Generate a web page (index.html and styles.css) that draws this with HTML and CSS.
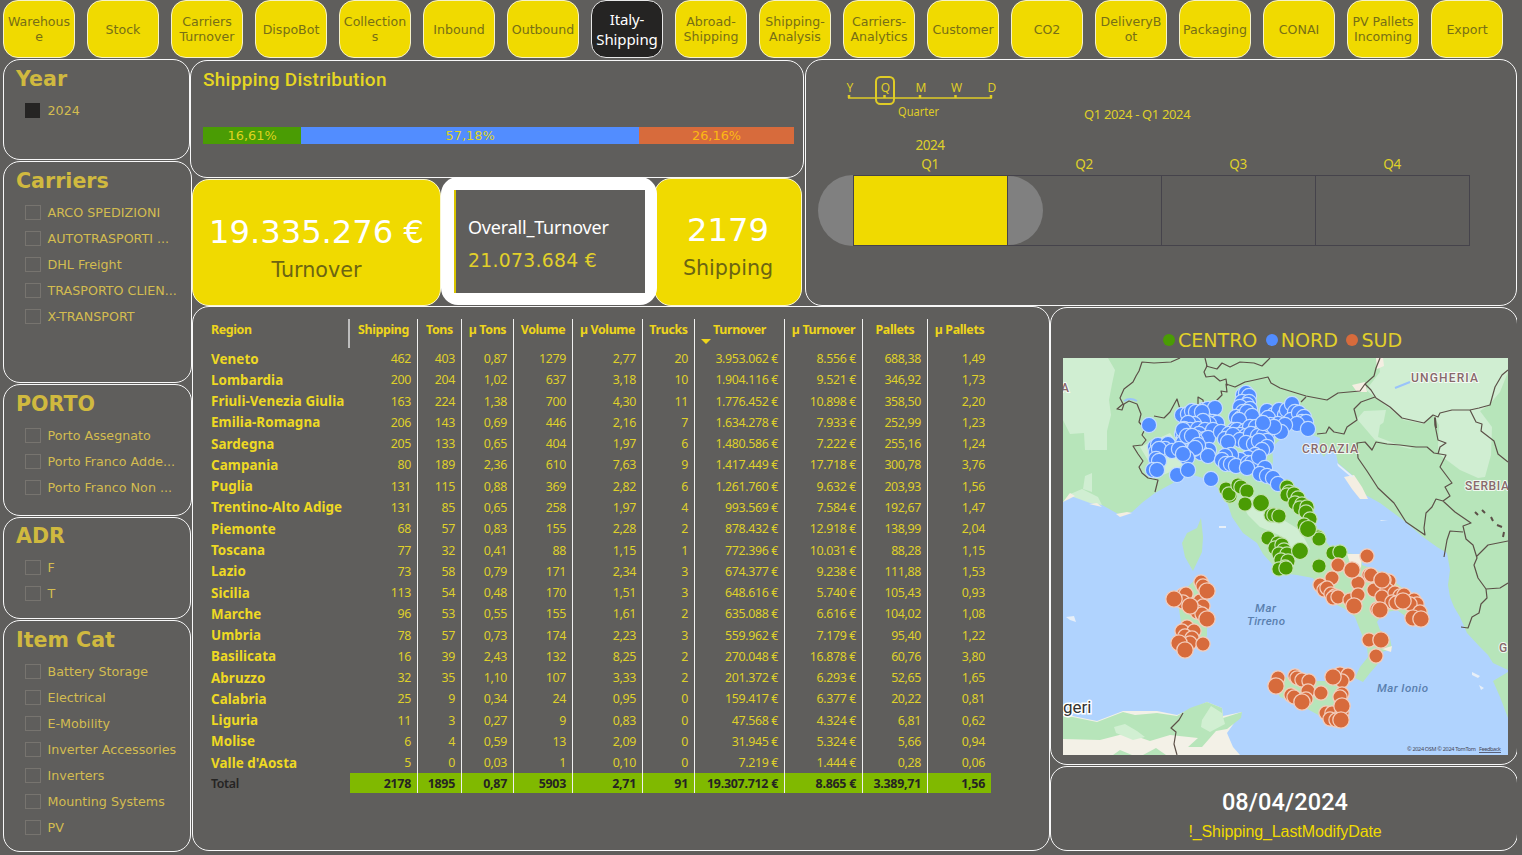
FILE: index.html
```html
<!DOCTYPE html>
<html lang="it">
<head>
<meta charset="utf-8">
<title>Italy-Shipping</title>
<link rel="stylesheet" href="styles.css">
</head>
<body>
<nav class="tabs">
<a class="tab">Warehous<br>e</a><a class="tab">Stock</a><a class="tab">Carriers Turnover</a><a class="tab">DispoBot</a><a class="tab">Collection<br>s</a><a class="tab">Inbound</a><a class="tab">Outbound</a><a class="tab active">Italy-<br>Shipping</a><a class="tab">Abroad-<br>Shipping</a><a class="tab">Shipping-<br>Analysis</a><a class="tab">Carriers-<br>Analytics</a><a class="tab">Customer</a><a class="tab">CO2</a><a class="tab">DeliveryB<br>ot</a><a class="tab">Packaging</a><a class="tab">CONAI</a><a class="tab">PV Pallets Incoming</a><a class="tab">Export</a>
</nav>
<div class="main">
<aside class="filters">
<section class="panel slicer year"><h2>Year</h2><ul><li class="on">2024</li></ul></section>
<section class="panel slicer carriers"><h2>Carriers</h2><ul><li>ARCO SPEDIZIONI</li><li>AUTOTRASPORTI ...</li><li>DHL Freight</li><li>TRASPORTO CLIEN...</li><li>X-TRANSPORT</li></ul></section>
<section class="panel slicer porto"><h2>PORTO</h2><ul><li>Porto Assegnato</li><li>Porto Franco Adde...</li><li>Porto Franco Non ...</li></ul></section>
<section class="panel slicer adr"><h2>ADR</h2><ul><li>F</li><li>T</li></ul></section>
<section class="panel slicer items"><h2>Item Cat</h2><ul><li>Battery Storage</li><li>Electrical</li><li>E-Mobility</li><li>Inverter Accessories</li><li>Inverters</li><li>Mounting Systems</li><li>PV</li></ul></section>
</aside>
<div class="content">
<div class="upper">
<div class="summary">
<section class="panel distribution">
<h2>Shipping Distribution</h2>
<div class="bar"><span class="centro" style="width:16.61%">16,61%</span><span class="nord" style="width:57.18%">57,18%</span><span class="sud" style="width:26.21%">26,16%</span></div>
</section>
<div class="cards">
<section class="card turnover"><b>19.335.276 €</b><span>Turnover</span></section>
<section class="overall"><div><span>Overall_Turnover</span><b>21.073.684 €</b></div></section>
<section class="card shipping"><b>2179</b><span>Shipping</span></section>
</div>
</div>
<section class="panel timeline">
<div class="controls">
<svg class="grain" width="160" height="50" viewBox="840 72 160 50">
<path d="M848 98H992" stroke="#dfcc26" stroke-width="1.5"/>
<path d="M849 95v3M884.500 95v3M920 95v3M955.500 95v3M991 95v3" stroke="#dfcc26" stroke-width="2.500"/>
<rect x="876" y="77" width="18" height="27" rx="4.500" fill="none" stroke="#dfcc26" stroke-width="2"/>
<text x="850" y="92">Y</text><text x="885.500" y="92">Q</text><text x="921" y="92">M</text><text x="956.500" y="92">W</text><text x="992" y="92">D</text>
<text x="918.500" y="116" textLength="41" lengthAdjust="spacingAndGlyphs">Quarter</text>
</svg>
<span class="range">Q1 2024 - Q1 2024</span>
</div>
<div class="years"><span>2024</span></div>
<div class="quarters"><span>Q1</span><span>Q2</span><span>Q3</span><span>Q4</span></div>
<div class="cells"><i class="handle left"></i><i class="cell chosen"></i><i class="cell next"><i class="handle right"></i></i><i class="cell"></i><i class="cell"></i></div>
</section>
</div>
<div class="lower">
<section class="panel table-panel">
<table>
<colgroup><col class="c-region"><col class="c1"><col class="c2"><col class="c3"><col class="c4"><col class="c5"><col class="c6"><col class="c7"><col class="c8"><col class="c9"><col class="c10"></colgroup>
<thead><tr><th>Region</th><th>Shipping</th><th>Tons</th><th>µ Tons</th><th>Volume</th><th>µ Volume</th><th>Trucks</th><th class="sorted">Turnover</th><th>µ Turnover</th><th>Pallets</th><th>µ Pallets</th></tr></thead>
<tbody>
<tr><th>Veneto</th><td>462</td><td>403</td><td>0,87</td><td>1279</td><td>2,77</td><td>20</td><td>3.953.062 €</td><td>8.556 €</td><td>688,38</td><td>1,49</td></tr>
<tr><th>Lombardia</th><td>200</td><td>204</td><td>1,02</td><td>637</td><td>3,18</td><td>10</td><td>1.904.116 €</td><td>9.521 €</td><td>346,92</td><td>1,73</td></tr>
<tr><th>Friuli-Venezia Giulia</th><td>163</td><td>224</td><td>1,38</td><td>700</td><td>4,30</td><td>11</td><td>1.776.452 €</td><td>10.898 €</td><td>358,50</td><td>2,20</td></tr>
<tr><th>Emilia-Romagna</th><td>206</td><td>143</td><td>0,69</td><td>446</td><td>2,16</td><td>7</td><td>1.634.278 €</td><td>7.933 €</td><td>252,99</td><td>1,23</td></tr>
<tr><th>Sardegna</th><td>205</td><td>133</td><td>0,65</td><td>404</td><td>1,97</td><td>6</td><td>1.480.586 €</td><td>7.222 €</td><td>255,16</td><td>1,24</td></tr>
<tr><th>Campania</th><td>80</td><td>189</td><td>2,36</td><td>610</td><td>7,63</td><td>9</td><td>1.417.449 €</td><td>17.718 €</td><td>300,78</td><td>3,76</td></tr>
<tr><th>Puglia</th><td>131</td><td>115</td><td>0,88</td><td>369</td><td>2,82</td><td>6</td><td>1.261.760 €</td><td>9.632 €</td><td>203,93</td><td>1,56</td></tr>
<tr><th>Trentino-Alto Adige</th><td>131</td><td>85</td><td>0,65</td><td>258</td><td>1,97</td><td>4</td><td>993.569 €</td><td>7.584 €</td><td>192,67</td><td>1,47</td></tr>
<tr><th>Piemonte</th><td>68</td><td>57</td><td>0,83</td><td>155</td><td>2,28</td><td>2</td><td>878.432 €</td><td>12.918 €</td><td>138,99</td><td>2,04</td></tr>
<tr><th>Toscana</th><td>77</td><td>32</td><td>0,41</td><td>88</td><td>1,15</td><td>1</td><td>772.396 €</td><td>10.031 €</td><td>88,28</td><td>1,15</td></tr>
<tr><th>Lazio</th><td>73</td><td>58</td><td>0,79</td><td>171</td><td>2,34</td><td>3</td><td>674.377 €</td><td>9.238 €</td><td>111,88</td><td>1,53</td></tr>
<tr><th>Sicilia</th><td>113</td><td>54</td><td>0,48</td><td>170</td><td>1,51</td><td>3</td><td>648.616 €</td><td>5.740 €</td><td>105,43</td><td>0,93</td></tr>
<tr><th>Marche</th><td>96</td><td>53</td><td>0,55</td><td>155</td><td>1,61</td><td>2</td><td>635.088 €</td><td>6.616 €</td><td>104,02</td><td>1,08</td></tr>
<tr><th>Umbria</th><td>78</td><td>57</td><td>0,73</td><td>174</td><td>2,23</td><td>3</td><td>559.962 €</td><td>7.179 €</td><td>95,40</td><td>1,22</td></tr>
<tr><th>Basilicata</th><td>16</td><td>39</td><td>2,43</td><td>132</td><td>8,25</td><td>2</td><td>270.048 €</td><td>16.878 €</td><td>60,76</td><td>3,80</td></tr>
<tr><th>Abruzzo</th><td>32</td><td>35</td><td>1,10</td><td>107</td><td>3,33</td><td>2</td><td>201.372 €</td><td>6.293 €</td><td>52,65</td><td>1,65</td></tr>
<tr><th>Calabria</th><td>25</td><td>9</td><td>0,34</td><td>24</td><td>0,95</td><td>0</td><td>159.417 €</td><td>6.377 €</td><td>20,22</td><td>0,81</td></tr>
<tr><th>Liguria</th><td>11</td><td>3</td><td>0,27</td><td>9</td><td>0,83</td><td>0</td><td>47.568 €</td><td>4.324 €</td><td>6,81</td><td>0,62</td></tr>
<tr><th>Molise</th><td>6</td><td>4</td><td>0,59</td><td>13</td><td>2,09</td><td>0</td><td>31.945 €</td><td>5.324 €</td><td>5,66</td><td>0,94</td></tr>
<tr><th>Valle d'Aosta</th><td>5</td><td>0</td><td>0,03</td><td>1</td><td>0,10</td><td>0</td><td>7.219 €</td><td>1.444 €</td><td>0,28</td><td>0,06</td></tr>
</tbody>
<tfoot><tr><th>Total</th><td>2178</td><td>1895</td><td>0,87</td><td>5903</td><td>2,71</td><td>91</td><td>19.307.712 €</td><td>8.865 €</td><td>3.389,71</td><td>1,56</td></tr></tfoot>
</table>
</section>
<div class="side">
<section class="panel map-panel">
<div class="legend"><i class="centro"></i><span>CENTRO</span><i class="nord"></i><span>NORD</span><i class="sud"></i><span>SUD</span></div>
<svg class="map" width="445" height="397" viewBox="1063 358 445 397">
<defs>
<marker id="n" markerUnits="userSpaceOnUse" markerWidth="20" markerHeight="20" refX="10" refY="10"><circle cx="10" cy="10" r="7.600" fill="#528dff" stroke="#c3dcff" stroke-width="1.200"/></marker>
<marker id="c" markerUnits="userSpaceOnUse" markerWidth="20" markerHeight="20" refX="10" refY="10"><circle cx="10" cy="10" r="7.200" fill="#4a9c04" stroke="#c5e3b4" stroke-width="1.200"/></marker>
<marker id="cb" markerUnits="userSpaceOnUse" markerWidth="20" markerHeight="20" refX="10" refY="10"><circle cx="10" cy="10" r="8.500" fill="#4a9c04" stroke="#c5e3b4" stroke-width="1.200"/></marker>
<marker id="s" markerUnits="userSpaceOnUse" markerWidth="20" markerHeight="20" refX="10" refY="10"><circle cx="10" cy="10" r="7.100" fill="#d76b3c" stroke="#f3cdbb" stroke-width="1.300"/></marker>
<marker id="sb" markerUnits="userSpaceOnUse" markerWidth="20" markerHeight="20" refX="10" refY="10"><circle cx="10" cy="10" r="8.200" fill="#d76b3c" stroke="#f3cdbb" stroke-width="1.300"/></marker>
</defs>
<rect x="1063" y="358" width="445" height="397" fill="#b0d3fe"/>
<!-- mainland -->
<path fill="#b7e5ba" d="M1063 358H1508V670L1493 663 1488 655 1480 647 1467 633 1460 617 1454 607 1450 597 1448 585 1450 570 1447 553 1437 547 1423 537 1403 520 1380 503 1362 493 1352 475 1338 463 1335 449 1330 447 1324 457 1318 449 1320 438 1307 433 1290 430 1282 438 1272 447 1273 460 1272 470 1280 480 1290 483 1300 493 1310 507 1318 530 1330 547 1345 553 1362 555 1362 565 1377 570 1393 580 1413 597 1428 610 1427 620 1413 622 1397 610 1383 613 1377 622 1380 630 1390 638 1392 649 1382 652 1377 665 1370 673 1363 682 1355 678 1360 667 1368 657 1367 647 1360 630 1355 617 1347 610 1337 605 1323 593 1313 578 1297 575 1280 573 1263 554 1257 543 1243 533 1232 517 1227 502 1218 488 1203 478 1193 475 1183 478 1173 483 1155 493 1143 502 1132 512 1120 515 1102 505 1090 500 1074 495 1063 502Z"/>
<path fill="#b7e5ba" d="M1201 518L1203 537 1202 552 1193 571 1185 557 1182 543 1187 533 1197 528ZM1197 578L1182 592 1178 603 1181 622 1184 645 1192 651 1207 636 1207 605 1205 590ZM1272 681L1285 677 1300 681 1330 681 1352 673 1345 690 1342 705 1345 717 1338 722 1322 717 1300 705 1280 697ZM1508 672L1493 681 1500 697 1508 718Z"/>
<!-- north Africa -->
<path fill="#f3f1e7" d="M1063 714L1097 721 1123 711 1157 711 1177 715 1207 702 1222 708 1223 716 1242 712 1227 733 1233 747 1240 755H1063Z"/>
<path fill="#b7e5ba" d="M1063 715L1097 722 1123 712 1135 715 1157 713 1177 716 1190 708 1207 702 1222 708 1223 718 1242 712 1241 718 1227 729 1216 731 1202 747 1188 747 1198 738 1170 735 1150 741 1127 733 1100 740 1063 739ZM1113 755L1120 750 1132 755ZM1143 755L1156 748 1166 755Z"/>
<path fill="#d1efd2" d="M1114 727L1125 724 1137 731 1145 737 1133 740 1116 733ZM1202 720L1211 706 1222 713 1225 724 1210 732 1201 727Z"/>
<!-- lighter terrain -->
<path fill="#d0eed2" d="M1063 358H1108L1115 370 1112 384 1109 400 1111 415 1107 431 1107 450H1085L1084 433 1070 434 1063 420ZM1085 476L1092 473V492L1083 489ZM1068 495L1082 489 1098 497 1102 505 1090 503ZM1140 447L1170 433 1190 460 1175 470 1158 477ZM1378 358H1508V372L1500 392 1489 405 1480 411 1492 427 1491 455 1485 477 1478 478 1460 470 1440 455 1438 447 1439 425 1433 415 1424 424 1404 420 1380 401 1366 390 1380 372ZM1357 419L1364 411 1386 410 1383 425 1395 423 1418 440 1411 449 1394 445 1375 440ZM1240 500L1258 496 1275 515 1300 530 1310 549 1295 560 1279 535 1260 527 1248 515Z"/>
<path fill="#b7e5ba" d="M1380 425L1392 417 1414 429 1420 440 1416 449 1396 444 1378 437ZM1499 407L1508 401V430L1500 422Z"/>
<path fill="#f4eee2" d="M1352 385L1365 382 1367 392 1357 392ZM1376 358H1383L1384 366 1377 369ZM1344 477L1354 475 1362 487 1368 499 1360 499 1352 489ZM1063 502L1070 493 1075 496ZM1089 504L1097 503 1102 507ZM1347 554H1362L1361 568 1350 563ZM1116 514L1127 512 1132 513 1120 517ZM1382 649L1392 646 1391 652Z"/>
<path fill="#e7eff8" d="M1066 617L1074 616 1076 622 1070 620ZM1472 672L1480 676 1478 678 1472 675ZM1479 685L1484 688 1481 690ZM1219 526H1226V528H1219ZM1380 520L1388 521 1381 521ZM1337 463L1354 477 1351 477 1338 466Z"/>
<path fill="none" stroke="#9ac3fa" stroke-width="2" d="M1395 388L1410 382M1124 401Q1130 397 1137 401"/>
<!-- national borders -->
<g fill="none" stroke="#5c5048" stroke-width="1.200" stroke-linejoin="round">
<path d="M1180 358L1171 362 1154 363 1142 362 1139 371 1136 376 1133 382 1124 389 1120 398 1123 404 1117 409 1122 410 1124 404 1129 401 1137 404 1141 414 1139 422 1145 429 1142 435 1146 440 1142 445 1133 446 1138 454 1143 461 1139 467 1142 473 1148 478 1158 480 1155 492"/>
<path d="M1154 416L1164 418 1170 412 1177 399 1180 409 1185 412 1192 408 1198 405V397L1203 400 1204 407 1214 403 1222 395 1221 391 1227 392 1226 384 1235 387 1245 382 1250 381 1268 377 1271 383 1280 388 1306 396 1327 400 1338 393 1360 391 1365 384 1374 376 1376 368 1380 358"/>
<path d="M1205 358L1207 366 1204 372 1206 377 1214 376 1220 381 1226 379 1227 386M1206 366L1217 369 1222 363 1230 367 1240 362 1254 363 1262 366 1270 358"/>
<path d="M1365 384L1371 390 1376 398 1390 407 1402 418 1424 423 1433 415 1438 417 1440 413 1452 410 1470 410 1479 408 1490 405 1495 387 1502 375 1508 370"/>
<path d="M1375 397L1361 402 1354 409 1357 420 1347 427 1344 434 1334 432 1329 427 1326 433 1317 434M1306 397L1301 402"/>
<path d="M1357 443L1365 442 1372 450 1376 442 1387 444 1400 445 1416 447 1427 447 1434 453 1446 455 1440 467 1452 483 1445 487 1450 496 1443 501 1436 499 1432 507 1426 513 1424 528 1425 535 1406 522 1394 503 1378 488 1367 471 1358 458ZM1435 417V425L1438 440 1446 443 1440 447 1438 454M1470 410L1476 422 1482 424 1481 431 1494 441 1498 454 1508 462M1443 501L1455 512 1471 523 1463 526 1466 539 1473 545 1477 558 1474 565 1478 578 1486 589 1487 598 1481 604 1479 613 1472 617 1468 628 1461 627M1463 532L1450 531 1447 540 1444 557M1477 556L1488 545 1508 541M1486 589L1500 588 1508 583"/>
<path d="M1183 713L1179 720 1171 728 1176 732 1174 744 1177 755"/>
<path stroke-width="2" d="M1435 418L1436 428M1475 512l3 3M1482 510l3 3M1491 517l2 4M1497 525l5 2M1504 532l-1 5"/>
</g>
<g class="country"><text x="1061" y="392">A</text><text x="1411" y="382" textLength="67">UNGHERIA</text><text x="1302" y="453" textLength="56">CROAZIA</text><text x="1465" y="490" textLength="44">SERBIA</text><text x="1499" y="652">G</text></g>
<text class="city" x="1063" y="713">geri</text>
<g class="sea"><text x="1255" y="612" textLength="21">Mar</text><text x="1247" y="625" textLength="38">Tirreno</text><text x="1377" y="692" textLength="51">Mar Ionio</text></g>
<g fill="none" stroke="none">
<polyline class="dots-n" points="1182,415 1188,414 1192,411 1196,412 1204,410 1208,409 1215,408 1202,412 1213,422 1217,423 1209,424 1203,421 1194,424 1188,423 1184,429 1190,430 1198,429 1205,430 1213,430 1199,434 1182,434 1184,438 1196,438 1205,439 1183,443 1189,443 1193,447 1208,438 1196,441 1209,450 1201,453 1208,456 1183,430 1187,436 1192,436 1198,445 1194,449 1195,448 1149,425 1155,447 1158,445 1168,444 1165,449 1156,452 1159,449 1172,451 1179,449 1187,458 1183,454 1156,459 1159,461 1153,470 1157,470 1177,475 1188,470 1211,479 1243,395 1246,393 1249,396 1242,402 1249,402 1247,405 1240,407 1250,409 1243,412 1236,417 1241,418 1247,412 1252,416 1239,420 1221,432 1234,430 1229,434 1225,439 1237,430 1245,431 1250,427 1256,427 1262,430 1268,433 1240,435 1246,436 1233,435 1240,440 1251,434 1258,436 1264,435 1267,441 1228,442 1246,443 1254,444 1259,441 1267,447 1262,450 1255,455 1248,458 1240,460 1231,455 1225,456 1222,460 1226,464 1231,464 1236,466 1248,463 1252,463 1259,457 1247,468 1265,468 1260,474 1267,476 1273,478 1278,484 1267,411 1274,415 1279,410 1285,415 1268,418 1278,424 1287,410 1292,404 1295,412 1291,420 1299,413 1304,417 1302,422 1306,422 1297,424 1285,425 1281,432 1270,425 1274,427 1263,423 1308,429"/>
<polyline class="dots-c" points="1226,489 1230,496 1229,494 1238,485 1241,487 1247,491 1245,504 1271,515 1274,515 1279,516 1287,487 1289,492 1287,495 1294,494 1298,498 1295,503 1302,504 1300,508 1307,507 1306,512 1310,519 1304,525 1307,530 1318,537 1319,539 1268,538 1278,543 1275,548 1282,545 1284,550 1279,554 1287,554 1281,560 1288,561 1285,567 1279,569 1286,568 1333,553 1340,552 1319,566"/>
<polyline class="dots-cb" points="1261,503 1308,529 1300,551"/>
<polyline class="dots-s" points="1367,556 1338,565 1332,578 1369,575 1371,575 1389,581 1384,580 1358,583 1320,585 1324,590 1327,588 1331,594 1335,596 1333,598 1338,597 1350,600 1358,595 1374,590 1387,590 1382,597 1395,593 1400,596 1404,595 1377,609 1392,602 1396,603 1414,600 1417,604 1410,604 1420,612 1369,640 1376,656 1201,582 1203,586 1183,595 1186,594 1183,602 1200,601 1190,606 1203,606 1197,612 1202,614 1187,627 1182,631 1194,631 1185,636 1192,638 1190,643 1203,644 1278,678 1295,676 1297,678 1302,680 1309,681 1340,674 1348,675 1342,681 1291,695 1294,697 1308,691 1306,699 1321,693 1342,694 1340,697 1326,713 1332,713 1342,713 1330,719 1336,720"/>
<polyline class="dots-sb" points="1352,570 1382,580 1354,606 1380,610 1403,601 1413,618 1421,619 1381,640 1207,591 1174,599 1190,606 1207,619 1179,643 1185,650 1276,686 1333,677 1342,706 1302,702 1341,720"/>
</g>
<text class="credits" x="1407" y="751" textLength="69">© 2024 OSM  © 2024 TomTom</text><text class="credits" x="1479" y="751" textLength="22">Feedback</text><path d="M1479 752.500h22" stroke="#445" stroke-width=".8"/>
</svg>
</section>
<section class="panel date-panel"><b>08/04/2024</b><span>!_Shipping_LastModifyDate</span></section>
</div>
</div>
</div>
</div>
</body>
</html>
```
FILE: styles.css
```css
* { box-sizing: border-box; }
body { margin: 0; width: 1522px; height: 855px; overflow: hidden; background: #5f5e5c; color: #e2d02a; font-family: "DejaVu Sans", Verdana, sans-serif; }
h2, ul { margin: 0; padding: 0; }
.centro { background: #4a9c04; }
.nord { background: #528dff; }
.sud { background: #d76b3c; }

.tabs { display: flex; gap: 12px; padding-left: 3px; height: 58px; }
.tab { flex: 0 0 72px; height: 58px; display: flex; align-items: center; justify-content: center; text-align: center; padding: 0 1px; border: 1px solid #f6f2c9; border-radius: 15px; background: #f0da00; color: #776f16; font-size: 12.6px; line-height: 15px; }
.tab.active { background: #252423; border-color: #e8e8e8; color: #fff; font: 15px/20px "Noto Sans", sans-serif; letter-spacing: -.1px; padding: 0 0 1px; }

.main { display: flex; padding: 1px 0 0 3px; }
.panel { border: 1px solid #f8f8f8; border-radius: 17px; }
.filters { width: 187px; display: flex; flex-direction: column; gap: 1px; }
.slicer { padding: 7px 0 0 12px; color: #d3bc50; }
.slicer h2 { font-size: 20.6px; line-height: 25px; color: #d0b93f; }
.slicer ul { list-style: none; padding: 5px 0 0 9px; }
.slicer li { display: flex; align-items: center; gap: 7px; height: 26px; font-size: 12.7px; white-space: nowrap; }
.slicer li::before { content: ""; flex: none; width: 14px; height: 13px; margin-left: -.5px; border: 1px solid #77746f; }
.slicer li.on::before { width: 13px; margin-right: 1px; background: #252423; border-color: #252423; }
.year { height: 101px; }
.carriers { height: 222px; width: 189px; }
.porto { height: 132px; width: 189px; }
.adr { height: 102px; width: 188px; padding-top: 6px; }
.items { height: 232px; width: 188px; }

.content { width: 1328px; }
.upper { display: flex; gap: 1px; height: 247px; }
.summary { width: 614px; padding-top: 1px; }
.distribution { height: 118px; padding: 7px 9px 0 12px; }
.distribution h2 { font: 500 19px/24px Roboto, sans-serif; letter-spacing: .28px; color: #e6d622; }
.bar { display: flex; margin-top: 35px; height: 17px; }
.bar span { font-size: 12.9px; line-height: 17px; text-align: center; color: #dfd31f; }
.bar .sud { color: #fcb813; }
.cards { display: flex; padding-left: 2px; height: 128px; }
.card { display: flex; flex-direction: column; align-items: center; background: #f0da00; border: 1px solid #fbf7cf; border-radius: 17px; }
.card b { font-weight: 400; font-size: 32.2px; line-height: 40px; color: #fff; }
.card span { font-size: 20.7px; line-height: 26px; margin-top: 5px; color: #6c6512; }
.turnover { width: 249px; height: 127px; margin-top: 1px; padding-top: 32px; }
.shipping { width: 148px; height: 128px; margin-left: -3px; padding-top: 31px; }
.overall { width: 216px; height: 128px; margin-top: -1px; padding: 13px 12px 12px 13px; background: #fff; border-radius: 17px; position: relative; z-index: 1; }
.overall div { height: 103px; background: #5f5e5c; border-left: 2px solid #d8c400; padding: 23px 0 0 12px; display: flex; flex-direction: column; }
.overall span { font: 18px/28px "Noto Sans", sans-serif; letter-spacing: -.2px; color: #fff; }
.overall b { font: 18.8px/28px "DejaVu Sans", sans-serif; margin-top: 6px; color: #e2d02a; letter-spacing: .3px; }

.timeline { width: 712px; padding: 12px 0 0 12px; font: 13.5px/19px "Noto Sans", sans-serif; color: #dfd02a; }
.controls { display: flex; padding-left: 22px; height: 64px; }
.grain text { font: 12px "Noto Sans", sans-serif; fill: #dfcc26; text-anchor: middle; }
.range { margin: 33px 0 0 84px; font-size: 13px; letter-spacing: -.36px; }
.years { width: 224px; text-align: center; height: 19px; letter-spacing: -.5px; }
.quarters { display: grid; grid-template-columns: repeat(4, 154px); padding-left: 35px; height: 20px; text-align: center; letter-spacing: -.4px; }
.cells { display: grid; grid-template-columns: 35px 155px repeat(3, 154px); height: 71px; }
.cell { border: 1px solid #45434b; border-left-width: 0; }
.chosen { background: #f0da00; border-left-width: 1px; }
.handle { display: block; background: #808080; height: 71px; width: 35px; }
.left { border-radius: 35px 0 0 35px / 36px 0 0 36px; }
.right { height: 69px; border-radius: 0 35px 35px 0 / 0 35px 35px 0; }

.lower { display: flex; padding-left: 2px; }
.table-panel { width: 858px; height: 545px; padding: 12px 0 0 12px; }
table { width: 786px; table-layout: fixed; border-collapse: separate; border-spacing: 0; font: 12.4px/15px "Noto Sans", sans-serif; letter-spacing: -.36px; color: #dfd02a; }
.c-region { width: 145px; } .c1 { width: 68px; } .c2 { width: 44px; } .c3 { width: 52px; } .c4 { width: 59px; } .c5 { width: 70px; } .c6 { width: 52px; } .c7 { width: 90px; } .c8 { width: 78px; } .c9 { width: 65px; } .c10 { width: 63px; }
th, td { padding: 0 6px 0 0; border-right: 1px solid #f0f0f0; text-align: right; white-space: nowrap; }
tr > :last-child { border-right: 0; }
tr > :first-child { text-align: left; padding-left: 6px; border-right: 0; }
thead th { height: 29px; padding: 3px 0 0; text-align: center; vertical-align: top; color: #eed51b; letter-spacing: -.36px; }
thead th:first-child { border-right: 2px solid #bdbdbd; }
.sorted { position: relative; }
.sorted::after { content: ""; position: absolute; left: 6px; top: 20px; border: 5px solid transparent; border-top-color: #eed51b; border-bottom: 0; }
tbody tr { height: 21.28px; }
tbody td, tbody th { height: 21.28px; }
tbody td { padding-top: 0; }
tbody th { padding-top: 1px; font-size: 13.4px; letter-spacing: .07px; color: #eed923; }
tfoot td, tfoot th { height: 20px; padding-top: 1px; font-weight: 700; color: #252423; }
tfoot td { letter-spacing: -.25px; background: #80b900; }
tfoot th { font-weight: 600; }

.side { width: 467px; overflow: hidden; padding-top: 1px; display: flex; flex-direction: column; gap: 1px; }
.side .panel { width: 468px; }
.map-panel { height: 458px; padding: 20px 0 0 12px; }
.legend { display: flex; align-items: center; height: 24px; margin: 0 0 6px 100px; font-size: 19.1px; letter-spacing: -.05px; color: #e2d02a; }
.legend i { width: 12px; height: 12px; border-radius: 50%; margin-right: 3px; }
.legend span { margin-right: 8.5px; }
.map { display: block; }
.dots-n { marker: url(#n); }
.dots-c { marker: url(#c); }
.dots-cb { marker: url(#cb); }
.dots-s { marker: url(#s); }
.dots-sb { marker: url(#sb); }
.country { font: 500 12px Roboto, sans-serif; fill: #88696b; stroke: #fff; stroke-width: 2px; stroke-opacity: .8; paint-order: stroke; }
.city { font: 17px Roboto, sans-serif; fill: #333; stroke: #fff; stroke-width: 3px; paint-order: stroke; }
.sea { font: italic 500 11.5px Roboto, sans-serif; fill: #5a7fae; }
.credits { font: 5.5px "Noto Sans", sans-serif; fill: #445; }
.date-panel { height: 85px; padding-top: 20px; display: flex; flex-direction: column; align-items: center; }
.date-panel b { font: 500 23.5px/30px Roboto, sans-serif; letter-spacing: .1px; margin-left: 2px; color: #fff; }
.date-panel span { font: 16px/22px "Liberation Sans", Arial, sans-serif; margin: 4px 0 0 2px; letter-spacing: -.1px; color: #f0da00; }
```
